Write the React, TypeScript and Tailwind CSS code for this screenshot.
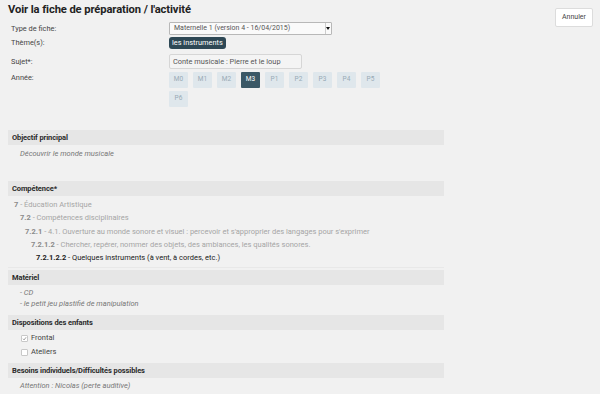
import React from "react";

const years = ["M0", "M1", "M2", "M3", "P1", "P2", "P3", "P4", "P5", "P6"];

function Bar({ children }: { children: React.ReactNode }) {
  return (
    <div className="ml-2 w-[436px] h-[15px] bg-[#e6e6e6] flex items-center pl-1 text-[7.5px] font-bold text-[#2a2a2a] tracking-[-0.1px]">
      {children}
    </div>
  );
}

function Check({ checked }: { checked?: boolean }) {
  return (
    <span className="w-[7px] h-[7px] border border-[#c8c8c8] bg-white rounded-[1px] flex items-center justify-center">
      {checked && (
        <svg width="5" height="5" viewBox="0 0 10 10">
          <path d="M2 5.5 L4.2 7.8 L8.2 2.5" stroke="#888" strokeWidth="1.6" fill="none" />
        </svg>
      )}
    </span>
  );
}

export default function App() {
  return (
    <div
      className="w-[600px] h-[394px] bg-[#f1f1f1] overflow-hidden text-[#333]"
      style={{ fontFamily: "Roboto, 'Liberation Sans', sans-serif" }}
    >
      <div className="flex justify-between">
        <div>
          <div className="pl-2 pt-[3px] text-[11.2px] font-bold leading-[14px] text-[#222] tracking-[-0.1px]">
            Voir la fiche de préparation / l'activité
          </div>
          <div className="mt-[5px] pl-[11px] grid grid-cols-[158px_auto] text-[7.4px] text-[#444] items-start">
            <div className="h-[13px] flex items-center">Type de fiche:</div>
            <div className="w-[163px] h-[13px] bg-[#fafafa] border border-[#b8b8b8] flex items-center justify-between pl-[4px] text-[7px] text-[#555] rounded-[1px]">
              <span>Maternelle 1 (version 4 - 16/04/2015)</span>
              <span className="h-full w-[5px] border-l border-[#ccc] flex items-center justify-center mr-[1px]">
                <svg width="4" height="3" viewBox="0 0 4 3">
                  <path d="M0 0 L4 0 L2 3 Z" fill="#111" />
                </svg>
              </span>
            </div>
            <div className="h-[12px] mt-[2px] flex items-center">Thème(s):</div>
            <div className="mt-[2px]">
              <span className="inline-flex items-center h-[12px] px-[3px] bg-[#2e4855] text-white rounded-[3px]">les instruments</span>
            </div>
            <div className="h-[15px] mt-[5px] flex items-center">Sujet*:</div>
            <div className="mt-[5px] w-[133px] h-[15px] bg-[#f4f4f4] border border-[#d6d6d6] rounded-[2px] flex items-center pl-[3px] text-[#555]">
              Conte musicale : Pierre et le loup
            </div>
            <div className="h-[12px] mt-[3px] flex items-center">Année:</div>
            <div className="mt-[3px] w-[220px] flex flex-wrap gap-x-[5px] gap-y-[3px]">
              {years.map((y) => (
                <div
                  key={y}
                  className={
                    y === "M3"
                      ? "w-[19px] h-[16px] flex items-center justify-center text-[6.5px] bg-[#3b5866] text-white rounded-[1px]"
                      : "w-[19px] h-[16px] flex items-center justify-center text-[6.5px] bg-[#dfe7ec] text-[#98aab5] rounded-[1px]"
                  }
                >
                  {y}
                </div>
              ))}
            </div>
          </div>
        </div>
        <div className="pt-[8px] pr-[7px]">
          <div className="w-[38px] h-[19px] bg-white border border-[#dcdcdc] rounded-[2px] flex items-center justify-center text-[7px] text-[#444]">
            Annuler
          </div>
        </div>
      </div>

      <div className="mt-[23px]">
        <Bar>Objectif principal</Bar>
        <div className="pl-5 h-[18px] flex items-center text-[7.5px] italic text-[#777]">Découvrir le monde musicale</div>
      </div>

      <div className="mt-[18px]">
        <Bar>Compétence*</Bar>
        <div className="pt-[2px] text-[7.5px] text-[#a5a5a5] leading-[13.3px]">
          <div className="pl-[14px]"><b className="text-[#8a8a8a]">7</b> - Éducation Artistique</div>
          <div className="pl-[20px]"><b className="text-[#8a8a8a]">7.2</b> - Compétences disciplinaires</div>
          <div className="pl-[25px]"><b className="text-[#8a8a8a]">7.2.1</b> - 4.1. Ouverture au monde sonore et visuel : percevoir et s'approprier des langages pour s'exprimer</div>
          <div className="pl-[31px]"><b className="text-[#8a8a8a]">7.2.1.2</b> - Chercher, repérer, nommer des objets, des ambiances, les qualités sonores.</div>
          <div className="pl-[36px] text-[#1a1a1a]"><b>7.2.1.2.2</b> - Quelques instruments (à vent, à cordes, etc.)</div>
        </div>
        <div className="ml-2 w-[436px] h-px bg-[#e8e8e8] mt-[3px]" />
      </div>

      <div className="mt-[2px]">
        <Bar>Matériel</Bar>
        <div className="pt-[2px] pl-5 text-[7.5px] italic text-[#777] leading-[11px]">
          <div>- CD</div>
          <div>- le petit jeu plastifié de manipulation</div>
        </div>
      </div>

      <div className="mt-[6px]">
        <Bar>Dispositions des enfants</Bar>
        <div className="pt-[1px] pl-[21px] text-[7.5px] text-[#444] leading-[14px]">
          <div className="flex items-center gap-[3px]"><Check checked /> Frontal</div>
          <div className="flex items-center gap-[3px]"><Check /> Ateliers</div>
        </div>
      </div>

      <div className="mt-[4px]">
        <Bar>Besoins individuels/Difficultés possibles</Bar>
        <div className="pl-5 h-[14px] flex items-center text-[7.5px] italic text-[#777]">Attention : Nicolas (perte auditive)</div>
      </div>
    </div>
  );
}
